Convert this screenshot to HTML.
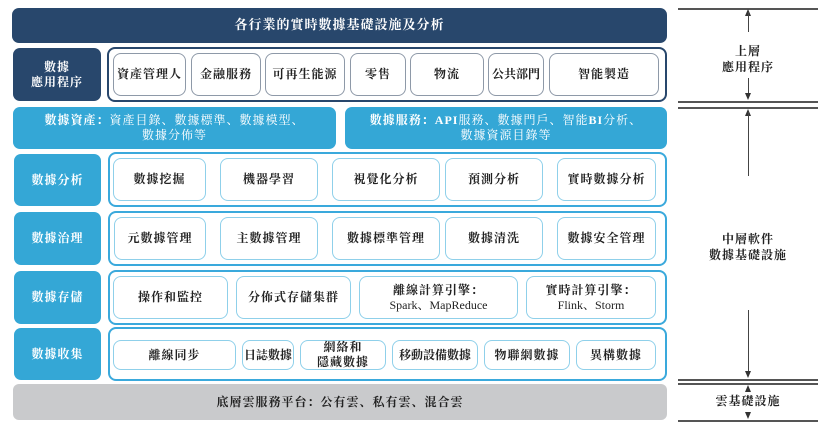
<!DOCTYPE html>
<html><head><meta charset="utf-8"><style>
body{margin:0;width:830px;height:426px;background:#fff;position:relative;overflow:hidden;font-family:"Liberation Serif","Noto Serif CJK SC","Noto Sans CJK TC",serif;font-weight:bold;}
.a{position:absolute;box-sizing:border-box;display:flex;flex-direction:column;align-items:center;justify-content:center;text-align:center;line-height:1.25;letter-spacing:1px;}
.nav{background:#28476c;color:#fff;border-radius:7px;}
.blu{background:#34a7d6;color:#fff;border-radius:7px;}
.ob{border:2px solid #28476c;border-radius:8px;}
.oc{border:2px solid #3aa9dc;border-radius:8px;}
.ia{border:1px solid #8e99a8;border-radius:8px;font-size:12px;color:#222;}
.ic{border:1px solid #8fd0ea;border-radius:8px;font-size:12px;color:#222;}
.ln{position:absolute;background:#555;height:1.5px;left:678px;width:140px;}
.vl{position:absolute;background:#444;width:1px;left:748px;}
.up,.dn{position:absolute;left:745px;width:0;height:0;border-left:3.5px solid transparent;border-right:3.5px solid transparent;}
.up{border-bottom:7px solid #333;}
.dn{border-top:7px solid #333;}
.t{position:absolute;width:140px;left:678px;text-align:center;font-size:12px;color:#222;line-height:1.3;letter-spacing:1px;}
</style></head><body>
<div class="a nav" style="left:12px;top:8px;width:655px;height:35px;font-size:13px;">各行業的實時數據基礎設施及分析</div>

<div class="a nav" style="left:13px;top:48px;width:88px;height:53px;font-size:12px;">數據<br>應用程序</div>
<div class="a ob" style="left:107px;top:47px;width:560px;height:55px;"></div>
<div class="a ia" style="left:113px;top:53px;width:73px;height:43px;">資產管理人</div>
<div class="a ia" style="left:191px;top:53px;width:70px;height:43px;">金融服務</div>
<div class="a ia" style="left:265px;top:53px;width:80px;height:43px;">可再生能源</div>
<div class="a ia" style="left:350px;top:53px;width:56px;height:43px;">零售</div>
<div class="a ia" style="left:410px;top:53px;width:74px;height:43px;">物流</div>
<div class="a ia" style="left:488px;top:53px;width:56px;height:43px;letter-spacing:0">公共部門</div>
<div class="a ia" style="left:549px;top:53px;width:110px;height:43px;">智能製造</div>

<div class="a blu" style="left:13px;top:107px;width:323px;height:42px;font-size:12px;font-weight:normal;"><div><b>數據資產：</b>資產目錄、數據標準、數據模型、</div><div>數據分佈等</div></div>
<div class="a blu" style="left:345px;top:107px;width:322px;height:42px;font-size:12px;font-weight:normal;"><div><b>數據服務：API</b>服務、數據門戶、智能<b>BI</b>分析、</div><div>數據資源目錄等</div></div>

<div class="a blu" style="left:14px;top:154px;width:87px;height:52px;font-size:12px;">數據分析</div>
<div class="a oc" style="left:108px;top:152px;width:559px;height:55px;"></div>
<div class="a ic" style="left:113px;top:158px;width:93px;height:43px;">數據挖掘</div>
<div class="a ic" style="left:220px;top:158px;width:98px;height:43px;">機器學習</div>
<div class="a ic" style="left:332px;top:158px;width:108px;height:43px;">視覺化分析</div>
<div class="a ic" style="left:445px;top:158px;width:98px;height:43px;">預測分析</div>
<div class="a ic" style="left:557px;top:158px;width:99px;height:43px;">實時數據分析</div>

<div class="a blu" style="left:14px;top:212px;width:87px;height:53px;font-size:12px;">數據治理</div>
<div class="a oc" style="left:108px;top:211px;width:559px;height:55px;"></div>
<div class="a ic" style="left:114px;top:217px;width:92px;height:43px;">元數據管理</div>
<div class="a ic" style="left:220px;top:217px;width:98px;height:43px;">主數據管理</div>
<div class="a ic" style="left:332px;top:217px;width:108px;height:43px;">數據標準管理</div>
<div class="a ic" style="left:445px;top:217px;width:98px;height:43px;">數據清洗</div>
<div class="a ic" style="left:557px;top:217px;width:99px;height:43px;">數據安全管理</div>

<div class="a blu" style="left:14px;top:271px;width:87px;height:53px;font-size:12px;">數據存儲</div>
<div class="a oc" style="left:108px;top:270px;width:559px;height:55px;"></div>
<div class="a ic" style="left:113px;top:276px;width:115px;height:43px;">操作和監控</div>
<div class="a ic" style="left:236px;top:276px;width:115px;height:43px;">分佈式存儲集群</div>
<div class="a ic" style="left:359px;top:276px;width:159px;height:43px;"><div>離線計算引擎：</div><div style="font-weight:normal;letter-spacing:0">Spark、MapReduce</div></div>
<div class="a ic" style="left:526px;top:276px;width:130px;height:43px;"><div>實時計算引擎：</div><div style="font-weight:normal;letter-spacing:0">Flink、Storm</div></div>

<div class="a blu" style="left:14px;top:328px;width:87px;height:52px;font-size:12px;">數據收集</div>
<div class="a oc" style="left:108px;top:327px;width:559px;height:54px;"></div>
<div class="a ic" style="left:113px;top:340px;width:123px;height:30px;">離線同步</div>
<div class="a ic" style="left:242px;top:340px;width:52px;height:30px;letter-spacing:0">日誌數據</div>
<div class="a ic" style="left:300px;top:340px;width:86px;height:30px;">網絡和<br>隱藏數據</div>
<div class="a ic" style="left:392px;top:340px;width:86px;height:30px;letter-spacing:0">移動設備數據</div>
<div class="a ic" style="left:484px;top:340px;width:86px;height:30px;">物聯網數據</div>
<div class="a ic" style="left:576px;top:340px;width:80px;height:30px;">異構數據</div>

<div class="a" style="left:13px;top:384px;width:654px;height:36px;background:#c9cacc;border-radius:6px;font-size:12px;color:#222;">底層雲服務平台：公有雲、私有雲、混合雲</div>

<div class="ln" style="top:8px"></div>
<div class="up" style="top:9px"></div>
<div class="vl" style="top:12px;height:20px"></div>
<div class="t" style="top:44px">上層<br>應用程序</div>
<div class="vl" style="top:78px;height:16px"></div>
<div class="dn" style="top:93px"></div>
<div class="ln" style="top:101px"></div>
<div class="ln" style="top:107px"></div>
<div class="up" style="top:109px"></div>
<div class="vl" style="top:112px;height:64px"></div>
<div class="t" style="top:232px">中層軟件<br>數據基礎設施</div>
<div class="vl" style="top:310px;height:62px"></div>
<div class="dn" style="top:371px"></div>
<div class="ln" style="top:379px"></div>
<div class="ln" style="top:383px"></div>
<div class="up" style="top:385px"></div>
<div class="t" style="top:394px">雲基礎設施</div>
<div class="dn" style="top:412px"></div>
<div class="ln" style="top:420px"></div>
</body></html>
